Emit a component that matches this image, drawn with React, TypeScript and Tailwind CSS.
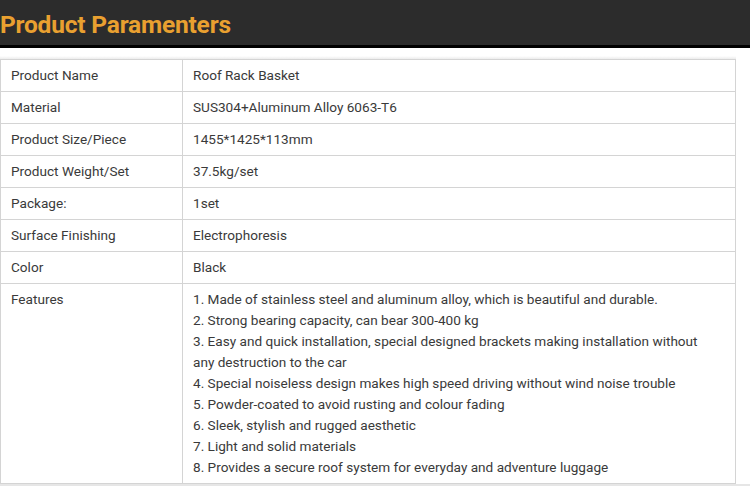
import React from "react";

const rows: [string, string][] = [
  ["Product Name", "Roof Rack Basket"],
  ["Material", "SUS304+Aluminum Alloy 6063-T6"],
  ["Product Size/Piece", "1455*1425*113mm"],
  ["Product Weight/Set", "37.5kg/set"],
  ["Package:", "1set"],
  ["Surface Finishing", "Electrophoresis"],
  ["Color", "Black"],
];

const features = [
  "1. Made of stainless steel and aluminum alloy, which is beautiful and durable.",
  "2. Strong bearing capacity, can bear 300-400 kg",
  "3. Easy and quick installation, special designed brackets making installation without any destruction to the car",
  "4. Special noiseless design makes high speed driving without wind noise trouble",
  "5. Powder-coated to avoid rusting and colour fading",
  "6. Sleek, stylish and rugged aesthetic",
  "7. Light and solid materials",
  "8. Provides a secure roof system for everyday and adventure luggage",
];

export default function App() {
  return (
    <div className="w-[750px] h-[486px] overflow-hidden bg-white" style={{ fontFamily: "Roboto, 'Liberation Sans', sans-serif" }}>
      <div className="h-[45px] bg-[#2c2c2c] flex items-end pb-[5px]">
        <h1 className="text-[24.5px] font-bold leading-[30px] text-[#e9a030] tracking-[-0.2px]">Product Paramenters</h1>
      </div>
      <div className="h-[3px] bg-black" />
      <div className="h-[8px]" />
      <div className="h-[3px] w-[736px] bg-gradient-to-b from-white to-[#ececec]" />
      <table className="w-[736px] border-collapse text-[13.6px] leading-[21px] text-[#3a3a3a] bg-white">
        <tbody>
          {rows.map(([k, v]) => (
            <tr key={k}>
              <td className="w-[182px] border border-[#d4d4d4] px-[10px] py-[5px] align-top">{k}</td>
              <td className="border border-[#d4d4d4] pl-[10px] pr-[22px] py-[5px] align-top">{v}</td>
            </tr>
          ))}
          <tr>
            <td className="w-[182px] border border-[#d4d4d4] px-[10px] py-[5px] align-top">Features</td>
            <td className="border border-[#d4d4d4] pl-[10px] pr-[22px] py-[5px] align-top">
              {features.map((f) => (
                <div key={f}>{f}</div>
              ))}
            </td>
          </tr>
        </tbody>
      </table>
      <div className="h-[4px] w-[750px] bg-[#e6e6e6]" />
    </div>
  );
}
